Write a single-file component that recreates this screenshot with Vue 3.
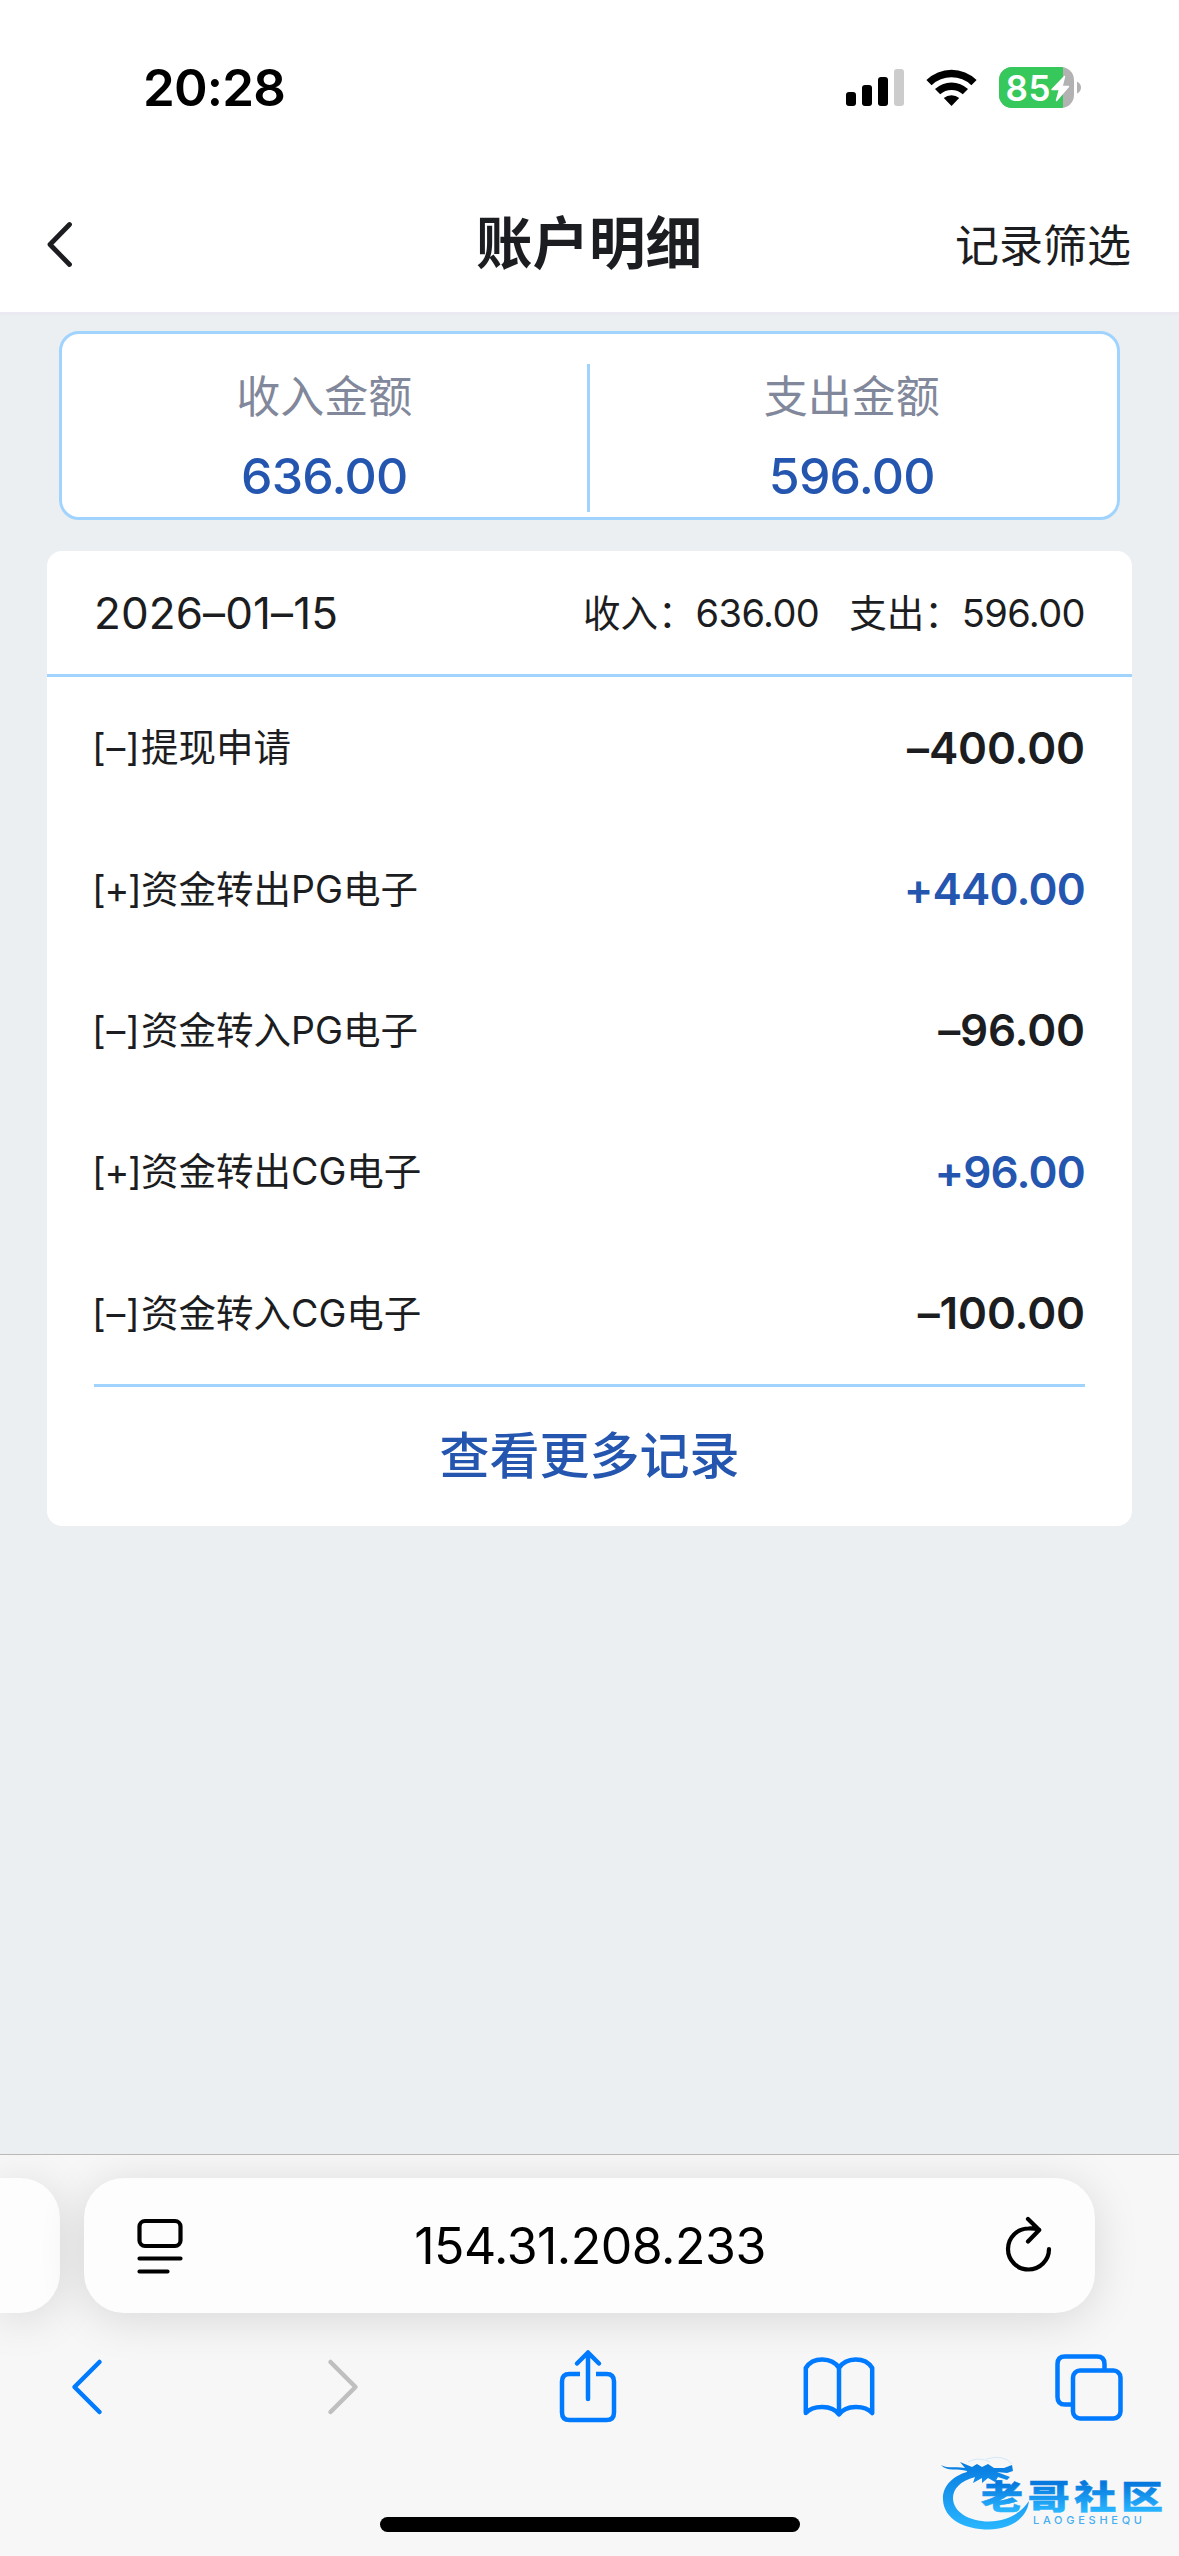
<script setup>
const records = [
  { sign: '–', label: '提现申请', amount: '400.00' },
  { sign: '+', label: '资金转出PG电子', amount: '440.00' },
  { sign: '–', label: '资金转入PG电子', amount: '96.00' },
  { sign: '+', label: '资金转出CG电子', amount: '96.00' },
  { sign: '–', label: '资金转入CG电子', amount: '100.00' },
]
</script>

<template>
  <div class="screen">
    <header class="top">
      <div class="status">
        <span class="time">20:28</span>
        <div class="indicators">
          <svg class="signal" width="58" height="37" viewBox="0 0 58 37">
            <rect x="0" y="23" width="10" height="14" rx="3" />
            <rect x="16" y="16" width="10" height="21" rx="3" />
            <rect x="32" y="8" width="10" height="29" rx="3" />
            <rect x="48" y="0" width="10" height="37" rx="3" fill="#cccccc" />
          </svg>
          <svg class="wifi" width="51" height="37" viewBox="0 0 51 37">
            <path d="M0.4 11 A36 36 0 0 1 50.6 11 L45.4 16.2 A29 29 0 0 0 5.6 16.2 Z" />
            <path d="M9 20 A24 24 0 0 1 42 20 L36.8 25.2 A17 17 0 0 0 14.2 25.2 Z" />
            <path d="M17.8 29 A12 12 0 0 1 33.2 29 L25.5 37 Z" />
          </svg>
          <svg class="battery" width="83" height="41" viewBox="0 0 83 41">
            <defs>
              <clipPath id="shell"><rect width="75" height="41" rx="13" /></clipPath>
            </defs>
            <g clip-path="url(#shell)">
              <rect width="75" height="41" fill="#b2b2b2" />
              <rect width="64" height="41" fill="#36c85a" />
            </g>
            <path d="M78 14.500 Q82 16.500 82 20.500 Q82 24.500 78 26.500 Z" fill="#b2b2b2" />
            <text x="6.500" y="33.500" class="level" textLength="45">85</text>
            <path d="M65.500 9.500 L53 22.500 H60.500 L57.500 33.500 L69.500 19.500 H63 Z" fill="#fff" stroke="#fff" stroke-width="1.500" stroke-linejoin="round" />
          </svg>
        </div>
      </div>
      <div class="nav">
        <svg class="back" width="26" height="46" viewBox="0 0 26 46">
          <path d="M22.500 3.500 L3 23.500 L22.500 43.500" fill="none" stroke="#1c1d21" stroke-width="4.800" stroke-linecap="round" stroke-linejoin="round" />
        </svg>
        <h1>账户明细</h1>
        <span class="filter">记录筛选</span>
      </div>
    </header>

    <main>
      <section class="summary">
        <div class="cell"><span class="cap">收入金额</span><span class="sum">636.00</span></div>
        <div class="divider"></div>
        <div class="cell"><span class="cap">支出金额</span><span class="sum">596.00</span></div>
      </section>

      <section class="card">
        <div class="day">
          <span class="date">2026–01–15</span>
          <div class="totals"><span class="total">收入：<b>636.00</b></span><span class="total">支出：<b>596.00</b></span></div>
        </div>
        <ul>
          <li v-for="r in records" :key="r.label">
            <span class="label"><i :class="{ tight: r.sign === '+' }">[{{ r.sign }}]</i>{{ r.label }}</span>
            <span class="amount" :class="{ plus: r.sign === '+' }">{{ r.sign }}{{ r.amount }}</span>
          </li>
        </ul>
        <div class="more">查看更多记录</div>
      </section>
    </main>

    <footer>
      <div class="tabs">
        <div class="tab prev"></div>
        <div class="tab current">
          <svg class="reader" width="46" height="56" viewBox="0 0 46 56" fill="none" stroke="#000" stroke-width="4.200" stroke-linecap="round">
            <rect x="2.500" y="3" width="41" height="25" rx="5.500" />
            <path d="M2.500 40.500 H43.500 M2.500 53.500 H30.500" />
          </svg>
          <span class="url">154.31.208.233</span>
          <svg class="reload" width="46" height="56" viewBox="0 0 46 56" fill="none" stroke="#000" stroke-width="4.200" stroke-linecap="round" stroke-linejoin="round">
            <path d="M43 33 A20.500 20.500 0 1 1 22.500 12.500 C26 12.300 30 12.800 33 13.500 M22 3 L33.200 14 L22 25.500" />
          </svg>
        </div>
      </div>
      <nav class="tools">
        <span><svg width="32" height="56" viewBox="0 0 32 56" class="blue"><path d="M28.500 3 L3.500 28 L28.500 53" /></svg></span>
        <span class="next"><svg width="32" height="56" viewBox="0 0 32 56" class="blue dim"><path d="M3.500 3 L28.500 28 L3.500 53" /></svg></span>
        <span><svg width="58" height="74" viewBox="0 0 58 74" class="blue">
          <path stroke-linecap="butt" d="M21 24 H10.500 Q3 24 3 31.500 V62.500 Q3 70 10.500 70 H47.500 Q55 70 55 62.500 V31.500 Q55 24 47.500 24 H37" />
          <path d="M29 49 V2.500 M18 13.500 L29 2.500 L40 13.500" />
        </svg></span>
        <span><svg width="72" height="60" viewBox="0 0 72 60" class="blue">
          <path d="M36 11 C29 0 10 -0.500 2.800 11 V56 C10 48 29 47.500 36 57.500 C43 47.500 62 48 69.200 56 V11 C62 -0.500 43 0 36 11 V57" />
        </svg></span>
        <span><svg width="68" height="67" viewBox="0 0 68 67" class="blue">
          <rect x="18" y="16.500" width="47.500" height="48" rx="7" />
          <path stroke-linecap="butt" d="M16 50.500 H10 Q2.500 50.500 2.500 43 V10 Q2.500 2.500 10 2.500 H42 Q49.500 2.500 49.500 10 V15" />
        </svg></span>
      </nav>
      <div class="home"></div>
      <svg class="mark" width="230" height="84" viewBox="0 0 230 84">
        <defs>
          <linearGradient id="ink" gradientUnits="userSpaceOnUse" x1="0" y1="10" x2="0" y2="80">
            <stop offset="0" stop-color="#0678de" /><stop offset="1" stop-color="#29b6ff" />
          </linearGradient>
          <linearGradient id="word" gradientUnits="userSpaceOnUse" x1="0" y1="-32" x2="0" y2="4">
            <stop offset="0" stop-color="#0678de" /><stop offset="1" stop-color="#29b6ff" />
          </linearGradient>
        </defs>
        <g fill="url(#ink)">
          <path d="M31 22 C12 26 2 38 3 51 C4 70 24 80.500 49 80.500 C70 80 87 70 89 52 C80 65 67 72 49 72.500 C29 72.500 13 63 13 49 C13 40 20 32 35 28 Z" />
          <path d="M1 16 C8 20 17 17 25 19 L20 13 L32 18 L37 15 L42 18 L48 15 L54 19 L64 19 L72 16 L73 22 L67 24 L57 23 L70 28 L67 31 L58 28 L55 33 L48 29 L42 34 L42 29 L33 34 L35 28 L26 29 L27 22 C18 19 7 23 1 16 Z" />
        </g>
        <path d="M28 13 Q38 7 50 13 M46 10 Q64 5 72 15" fill="none" stroke="#d3eafa" stroke-width="1" />
        <text transform="translate(41 59.500) scale(1 0.78)" class="brand" textLength="182" fill="url(#word)" stroke="url(#word)">老哥社区</text>
        <text x="93" y="74.500" class="latin" textLength="109">LAOGESHEQU</text>
      </svg>
    </footer>
  </div>
</template>

<style>
body { margin: 0; }
</style>

<style scoped>
.screen {
  width: 1179px;
  height: 2556px;
  display: flex;
  flex-direction: column;
  position: relative;
  overflow: hidden;
  background: #ebeff2;
  color: #1c1d21;
  font-family: Inter, "Noto Sans CJK SC", sans-serif;
}
svg { display: block; flex: none; overflow: visible; }
.top { height: 315px; box-sizing: border-box; background: #fff; border-bottom: 3px solid #ebe9f2; }
.status { height: 175px; padding: 0 97px 0 143px; display: flex; align-items: center; justify-content: space-between; box-sizing: border-box; }
.time { font-size: 51px; font-weight: 600; color: #000; letter-spacing: -0.800px; }
.indicators { display: flex; align-items: center; }
.wifi { margin: 0 22px; }
.level { font: 600 35px Inter, sans-serif; fill: #fff; }
.nav { height: 138px; padding: 0 48px 0 47px; display: grid; grid-template-columns: 1fr auto 1fr; align-items: center; }
h1 { margin: 0; font-size: 56.500px; font-weight: 700; line-height: 80px; }
.filter { justify-self: end; font-size: 44px; margin-top: -3px; }
main { flex: 1; }
.summary { margin: 16px 59px 0; height: 189px; box-sizing: border-box; border: 3px solid #a0d4ff; border-radius: 20px; background: #fff; display: flex; }
.divider { width: 3px; height: 148px; margin: 30px 0 0 -3px; background: #a0d4ff; }
.cell { flex: 1; display: flex; flex-direction: column; align-items: center; padding: 30px 3px 0 0; }
.cap { font-size: 44px; line-height: 66px; color: #82889b; }
.sum { font-size: 50px; line-height: 60px; margin-top: 16px; font-weight: 500; letter-spacing: -0.800px; color: #2456b0; }
.card { margin: 31px 47px 0; height: 975px; background: #fff; border-radius: 15px; }
.day { height: 126px; box-sizing: border-box; padding: 0 47px; border-bottom: 3px solid #a0d4ff; display: flex; align-items: center; justify-content: space-between; }
.date { font-size: 44px; letter-spacing: 0.100px; }
.totals { display: flex; gap: 30px; font-size: 37.500px; padding-bottom: 5px; }
b { font-weight: 400; font-size: 38px; letter-spacing: -0.600px; }
ul { list-style: none; margin: 0 47px; padding: 0; border-bottom: 3px solid #a0d4ff; }
li { height: 141.400px; display: flex; align-items: center; justify-content: space-between; }
.label { font-size: 37.500px; padding-bottom: 6px; }
.label i { display: inline-block; width: 49px; margin-left: -2px; font-style: normal; letter-spacing: 0.800px; white-space: nowrap; }
.label i.tight { letter-spacing: -1.300px; }
.amount { font-size: 44px; font-weight: 600; letter-spacing: -0.150px; }
.plus { color: #2456b0; letter-spacing: -0.800px; }
.more { height: 139px; line-height: 139px; text-align: center; font-size: 50px; font-weight: 500; color: #2456b0; }
footer { height: 402px; box-sizing: border-box; border-top: 1px solid #b8b8b8; background: #f7f7f7; overflow: hidden; }
.tabs { display: flex; gap: 24px; padding-top: 23px; }
.tab { height: 135px; background: #fdfdfd; box-shadow: 0 6px 46px rgba(0, 0, 0, 0.13); box-sizing: border-box; }
.prev { width: 60px; border-radius: 0 40px 40px 0; }
.current { width: 1011px; border-radius: 40px; padding: 0 43px 0 53px; display: flex; align-items: center; justify-content: space-between; }
.reload { margin-bottom: 4px; }
.url { font-size: 50px; letter-spacing: -0.500px; color: #000; margin-right: 9px; }
.tools { height: 74px; margin-top: 37px; padding: 0 40px 0 37px; display: flex; align-items: center; justify-content: space-between; }
.tools span { width: 100px; display: flex; justify-content: center; }
.tools .next { padding-left: 10px; box-sizing: border-box; }
.blue { fill: none; stroke: #007aff; stroke-width: 4.500; stroke-linecap: round; stroke-linejoin: round; }
.dim { stroke: #bfbfbf; }
.home { width: 420px; height: 15px; margin: 93px auto 0; border-radius: 8px; background: #000; }
.mark { position: absolute; left: 940px; top: 2449px; }
.brand { font: 900 42px "Noto Sans CJK SC", sans-serif; stroke-width: 0.600; }
.latin { font: 500 11px Inter, sans-serif; fill: #46aef0; }
</style>
